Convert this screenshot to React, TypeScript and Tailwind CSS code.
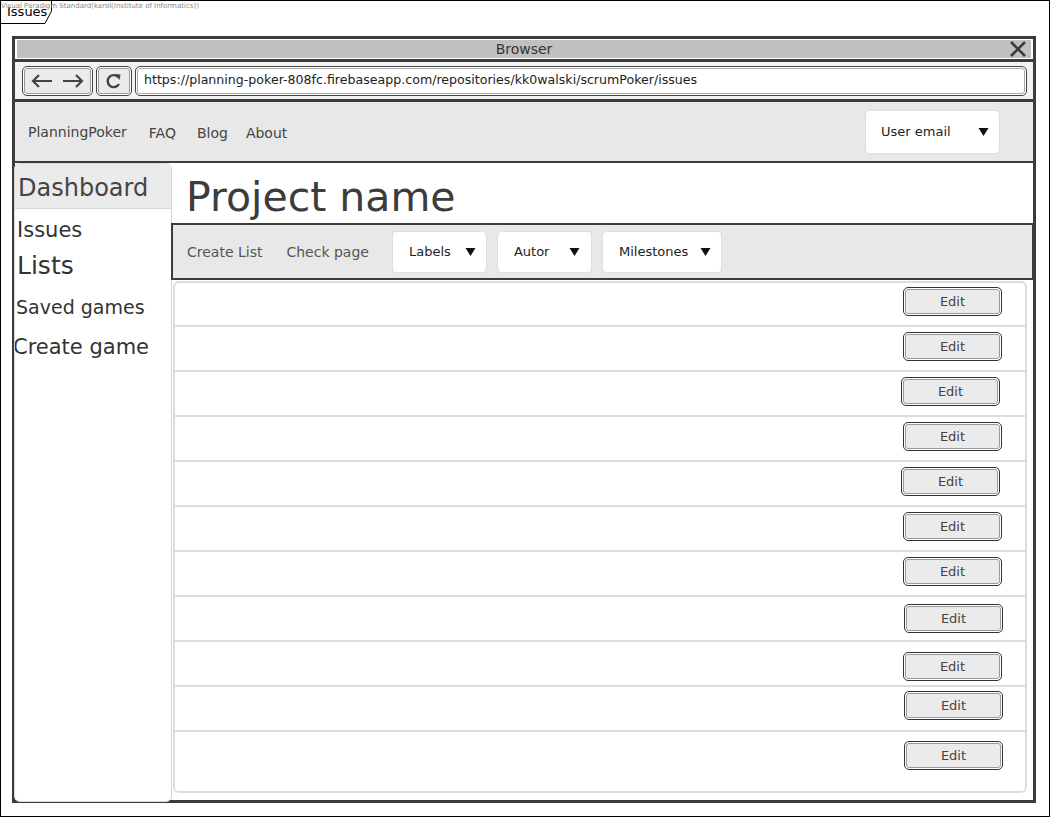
import React from 'react';

const font = { fontFamily: '"DejaVu Sans", "Liberation Sans", sans-serif' };

const rows = [
  { h: 'h-[44px]', btn: 'mr-[23px] mt-[4px]' },
  { h: 'h-[45px]', btn: 'mr-[23px] mt-[5px]' },
  { h: 'h-[45px]', btn: 'mr-[25px] mt-[5px]' },
  { h: 'h-[45px]', btn: 'mr-[23px] mt-[5px]' },
  { h: 'h-[45px]', btn: 'mr-[25px] mt-[5px]' },
  { h: 'h-[45px]', btn: 'mr-[23px] mt-[5px]' },
  { h: 'h-[45px]', btn: 'mr-[23px] mt-[5px]' },
  { h: 'h-[45px]', btn: 'mr-[22px] mt-[7px]' },
  { h: 'h-[45px]', btn: 'mr-[23px] mt-[10px]' },
  { h: 'h-[45px]', btn: 'mr-[22px] mt-[4px]' },
  { h: 'h-[59px]', btn: 'mr-[22px] mt-[9px]' },
];

const Caret = () => (
  <svg width="11" height="8" viewBox="0 0 11 8" className="shrink-0">
    <path d="M0.5 0 H10.5 L5.5 8 Z" fill="#111" />
  </svg>
);

const Dropdown = ({ label, w, gap }: { label: string; w: string; gap: string }) => (
  <div className={`flex items-center ${gap} ${w} h-[42px] pl-[16px] bg-white rounded-[4px] border border-[#dedede] text-[13px] text-[#222]`}>
    <span>{label}</span>
    <Caret />
  </div>
);

const EditButton = ({ cls }: { cls: string }) => (
  <div className={`${cls} w-[99px] h-[29px] rounded-[5px] border-[1.5px] border-[#333] p-[1px] bg-white`}>
    <div className="w-full h-full rounded-[3px] border border-[#9a9a9a] bg-[#ebebeb] flex items-center justify-center text-[13px] text-[#444]">
      Edit
    </div>
  </div>
);

export default function App() {
  return (
    <div style={font} className="relative w-[1050px] h-[817px] bg-white border border-black overflow-hidden">
      <div className="flex">
        <div className="relative h-[22px] w-[51px]">
          <svg className="absolute left-0 top-0" width="51" height="23" viewBox="0 0 51 23">
            <path d="M0 22.5 H44 L50.5 10 V0" stroke="#000" strokeWidth="1" fill="none" />
          </svg>
          <div className="relative pl-[6px] pt-[3px] text-[13px] leading-[16px] text-black">Issues</div>
        </div>
      </div>
      <div className="absolute left-0 top-[2px] text-[7px] leading-none text-[#888] whitespace-nowrap">
        Visual Paradigm Standard(karol(Institute of Informatics))
      </div>

      {/* browser window */}
      <div className="ml-[11px] mt-[13px] w-[1024px] h-[767px] border-[3px] border-[#3c3c3c] flex flex-col bg-white">
        <div className="h-[20px] px-[2px] pt-[1px] pb-[1px] bg-white">
          <div className="relative h-full bg-[#c0c0c0] flex items-center justify-center text-[14px] text-[#333]">
            Browser
            <svg className="absolute right-[4px] top-[1px]" width="18" height="16" viewBox="0 0 18 16">
              <path d="M2 1 L16 15 M16 1 L2 15" stroke="#3a3a3a" strokeWidth="2.6" />
            </svg>
          </div>
        </div>
        <div className="h-[3px] bg-[#3c3c3c]" />
        <div className="h-[37px] bg-[#f2f2f2] flex items-center gap-[4px] pl-[7px] pr-[6px]">
          <div className="w-[71px] h-[30px] rounded-[5px] border-[1.5px] border-[#444] p-[1px] bg-white">
            <div className="w-full h-full rounded-[3px] border border-[#999] bg-[#ebebeb] flex items-center justify-around px-[2px]">
              <svg width="24" height="16" viewBox="0 0 24 16">
                <path d="M22 8 H3 M9 2 L3 8 L9 14" stroke="#444" strokeWidth="2.2" fill="none" />
              </svg>
              <svg width="24" height="16" viewBox="0 0 24 16">
                <path d="M2 8 H21 M15 2 L21 8 L15 14" stroke="#444" strokeWidth="2.2" fill="none" />
              </svg>
            </div>
          </div>
          <div className="w-[36px] h-[30px] ml-[-1px] rounded-[5px] border-[1.5px] border-[#444] p-[1px] bg-white">
            <div className="w-full h-full rounded-[3px] border border-[#999] bg-[#ebebeb] flex items-center justify-center">
              <svg width="18" height="18" viewBox="0 0 18 18">
                <path d="M13.5 5.5 A6 6 0 1 0 14 12" stroke="#444" strokeWidth="2.4" fill="none" />
                <path d="M10 2 L15.5 2.5 L14.5 8 Z" fill="#444" />
              </svg>
            </div>
          </div>
          <div className="flex-1 h-[30px] ml-[-1px] rounded-[5px] border-[1.5px] border-[#444] p-[1px] bg-white">
            <div className="w-full h-full rounded-[3px] border border-[#aaa] bg-white flex items-center pl-[6px] text-[12.6px] text-[#222]">
              https://planning-poker-808fc.firebaseapp.com/repositories/kk0walski/scrumPoker/issues
            </div>
          </div>
        </div>
        <div className="h-[3px] bg-[#3c3c3c]" />
        <div className="h-[59px] bg-[#e8e8e8] flex items-center pl-[13px] pr-[33px] text-[14px] text-[#444]">
          <span className="mt-[2px]">PlanningPoker</span>
          <span className="ml-[22px] mt-[4px]">FAQ</span>
          <span className="ml-[21px] mt-[4px]">Blog</span>
          <span className="ml-[18px] mt-[4px]">About</span>
          <div className="ml-auto flex items-center gap-[27px] w-[135px] h-[44px] pl-[15px] bg-white rounded-[5px] border border-[#dedede] text-[13px] text-[#222]">
            <span>User email</span>
            <Caret />
          </div>
        </div>
        <div className="h-[2px] bg-[#3c3c3c]" />

        {/* content */}
        <div className="flex-1 flex min-h-0">
          <div className="w-[158px] ml-[-1px] mb-[-2px] bg-white border border-[#d6d6d6] rounded-[6px] flex flex-col text-[#333] overflow-hidden">
            <div className="h-[45px] bg-[#ebebeb] border-b border-[#d6d6d6] flex items-center pl-[3px] pt-[3px] text-[24px] text-[#444]">
              Dashboard
            </div>
            <div className="pl-[2px] mt-[8px] text-[21px] leading-[26px]">Issues</div>
            <div className="pl-[2px] mt-[7px] text-[25px] leading-[32px]">Lists</div>
            <div className="pl-[1px] mt-[12px] text-[19px] leading-[26px]">Saved games</div>
            <div className="ml-[-2px] mt-[13px] text-[21px] leading-[28px]">Create game</div>
          </div>
          <div className="flex-1 flex flex-col min-w-0">
            <div className="h-[60px] flex items-end pl-[14px] pb-[1px] text-[41px] leading-[50px] text-[#3c3c3c]">
              Project name
            </div>
            <div className="h-[57px] -ml-[1px] -mr-[1px] border-2 border-[#3c3c3c] bg-[#e8e8e8] flex items-center pl-[14px] text-[14px] text-[#555]">
              <span className="mt-[1px]">Create List</span>
              <span className="ml-[24px] mt-[1px]">Check page</span>
              <div className="ml-[23px] flex gap-[10px]">
                <Dropdown label="Labels" w="w-[95px]" gap="gap-[14px]" />
                <Dropdown label="Autor" w="w-[95px]" gap="gap-[20px]" />
                <Dropdown label="Milestones" w="w-[120px]" gap="gap-[12px]" />
              </div>
            </div>
            <div className="ml-[1px] mr-[6px] mt-[1px] h-[512px] bg-white border-2 border-[#dcdcdc] rounded-[6px] flex flex-col overflow-hidden">
              {rows.map((r, i) => (
                <div
                  key={i}
                  className={`${r.h} shrink-0 flex justify-end items-start ${i < rows.length - 1 ? 'border-b-2 border-[#dcdcdc]' : ''}`}
                >
                  <EditButton cls={r.btn} />
                </div>
              ))}
            </div>
          </div>
        </div>
      </div>
    </div>
  );
}
